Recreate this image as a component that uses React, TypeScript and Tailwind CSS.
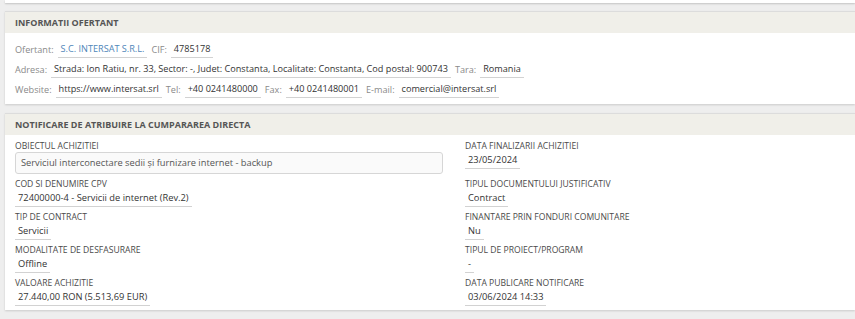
const font = { fontFamily: '"Open Sans", "Liberation Sans", sans-serif' };

function Val({ children, link = false }: { children: React.ReactNode; link?: boolean }) {
  return (
    <span
      className={
        "ml-[4px] mr-[4px] px-[3px] pb-[1px] border-b border-[#d2d2d2] " +
        (link ? "text-[#4f86b9]" : "text-[#333]")
      }
    >
      {children}
    </span>
  );
}

function Lbl({ children }: { children: React.ReactNode }) {
  return <span className="text-[#8a8a8a]">{children}</span>;
}

function Field({ label, value, box = false }: { label: string; value: string; box?: boolean }) {
  return (
    <div className="mb-[4px]">
      <div className="h-[12px] leading-[12px] text-[8.6px] text-[#4a4a4a] uppercase">{label}</div>
      {box ? (
        <div className="h-[22px] leading-[20px] px-[5px] border border-[#d6d6d6] rounded-[3px] bg-[#fafafa] text-[9.3px] text-[#555]">
          {value}
        </div>
      ) : (
        <div className="h-[17px] flex items-start">
          <span className="h-[17px] leading-[16px] px-[3px] border-b border-[#d2d2d2] text-[9.3px] text-[#333]">
            {value}
          </span>
        </div>
      )}
    </div>
  );
}

function Header({ title }: { title: string }) {
  return (
    <div className="h-[21px] bg-[#f0efe9] px-[10px] flex items-center text-[9px] font-bold text-[#555]">
      {title}
    </div>
  );
}

export default function App() {
  return (
    <div className="w-[855px] h-[319px] overflow-hidden bg-[#eeeeee]" style={font}>
      <div className="ml-[5px] h-[3px] bg-white shadow-[0_1px_2px_rgba(0,0,0,0.18)]" />

      <div className="ml-[5px] mt-[8px] bg-white border-t border-[#dcdcdc] shadow-[0_1px_2px_rgba(0,0,0,0.15)]">
        <Header title="INFORMATII OFERTANT" />
        <div className="px-[10px] pt-[7px] pb-[4px] text-[9.15px]">
          <div className="h-[20px] flex items-center">
            <Lbl>Ofertant:</Lbl>
            <Val link>S.C. INTERSAT S.R.L.</Val>
            <Lbl>CIF:</Lbl>
            <Val>4785178</Val>
          </div>
          <div className="h-[20px] flex items-center">
            <Lbl>Adresa:</Lbl>
            <Val>Strada: Ion Ratiu, nr. 33, Sector: -, Judet: Constanta, Localitate: Constanta, Cod postal: 900743</Val>
            <Lbl>Tara:</Lbl>
            <Val>Romania</Val>
          </div>
          <div className="h-[20px] flex items-center">
            <Lbl>Website:</Lbl>
            <Val>https://www.intersat.srl</Val>
            <Lbl>Tel:</Lbl>
            <Val>+40 0241480000</Val>
            <Lbl>Fax:</Lbl>
            <Val>+40 0241480001</Val>
            <Lbl>E-mail:</Lbl>
            <Val>comercial@intersat.srl</Val>
          </div>
        </div>
      </div>

      <div className="ml-[5px] mt-[9px] bg-white border-t border-[#dcdcdc] shadow-[0_1px_2px_rgba(0,0,0,0.15)]">
        <Header title="NOTIFICARE DE ATRIBUIRE LA CUMPARAREA DIRECTA" />
        <div className="px-[10px] pt-[5px] grid grid-cols-[428px_1fr] gap-x-[22px]">
          <Field label="Obiectul achizitiei" value="Serviciul interconectare sedii și furnizare internet - backup" box />
          <Field label="Data finalizarii achizitiei" value="23/05/2024" />
          <Field label="Cod si denumire CPV" value="72400000-4 - Servicii de internet (Rev.2)" />
          <Field label="Tipul documentului justificativ" value="Contract" />
          <Field label="Tip de contract" value="Servicii" />
          <Field label="Finantare prin fonduri comunitare" value="Nu" />
          <Field label="Modalitate de desfasurare" value="Offline" />
          <Field label="Tipul de proiect/program" value="-" />
          <Field label="Valoare achizitie" value="27.440,00 RON (5.513,69 EUR)" />
          <Field label="Data publicare notificare" value="03/06/2024 14:33" />
        </div>
      </div>
    </div>
  );
}
